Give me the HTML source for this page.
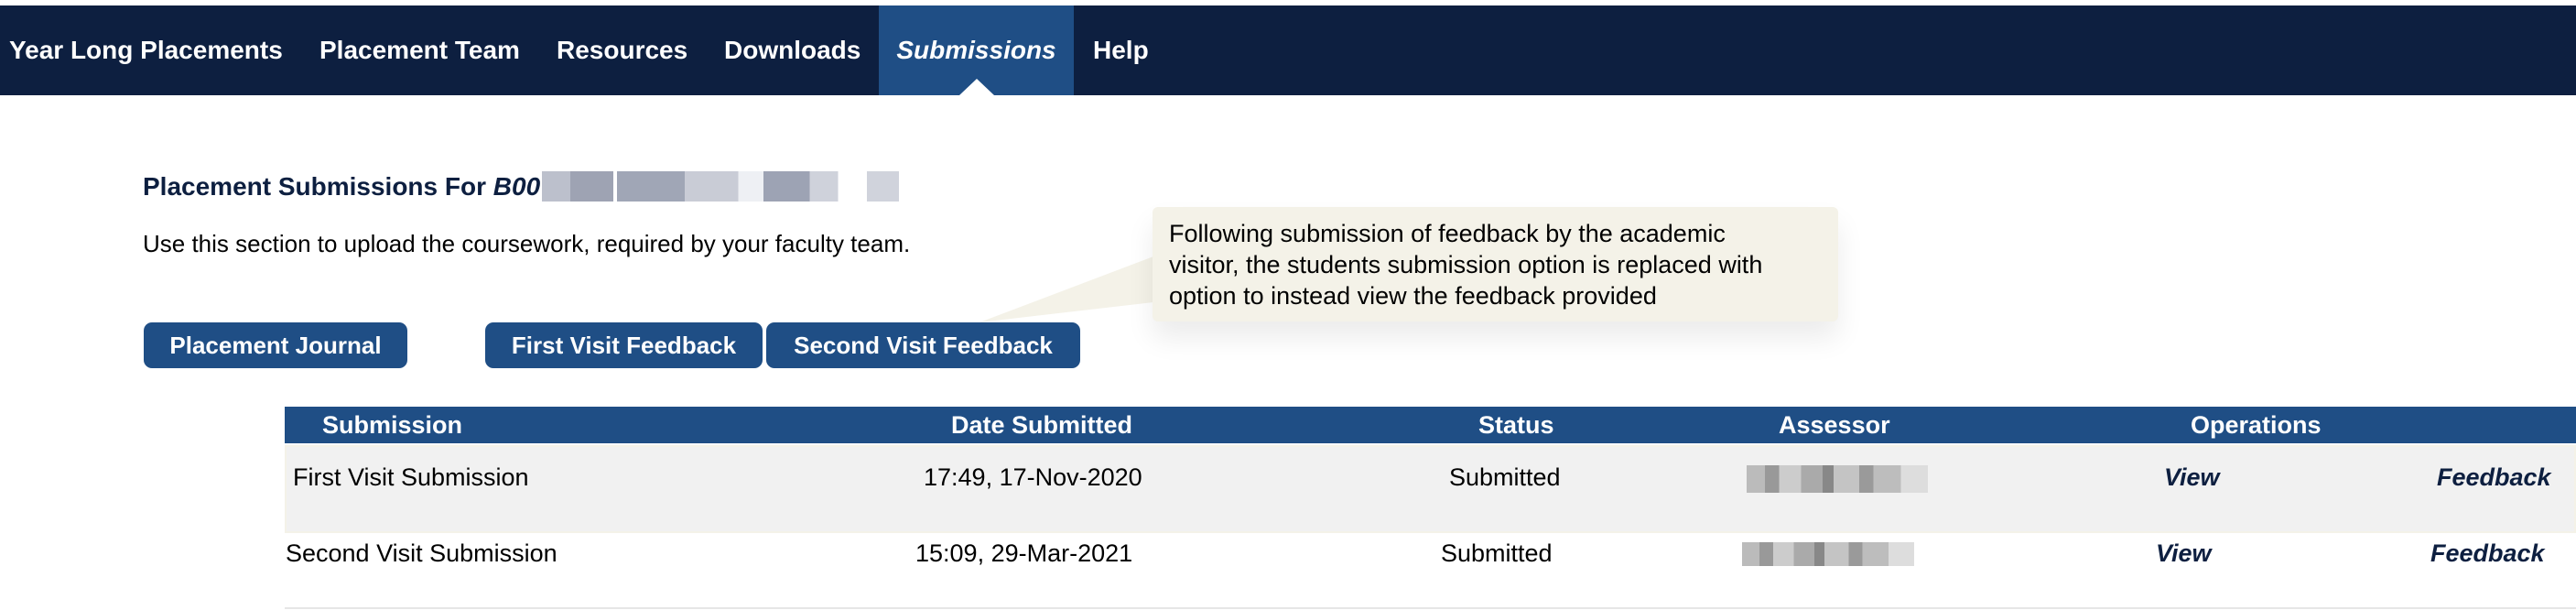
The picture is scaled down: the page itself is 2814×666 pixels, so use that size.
<!DOCTYPE html>
<html><head><meta charset="utf-8"><style>
*{margin:0;padding:0;box-sizing:border-box}
body{width:2814px;height:666px;background:#fff;font-family:"Liberation Sans",Arial,sans-serif;position:relative;overflow:hidden;color:#000}
.a{position:absolute;white-space:nowrap}
.nav{position:absolute;left:0;top:6px;width:2814px;height:98px;background:#0d1f40}
.ni{position:absolute;top:0;height:98px;line-height:98px;color:#fff;font-weight:bold;font-size:28px}
.btn{position:absolute;top:352px;height:50px;line-height:50px;background:#1f4e85;color:#fff;font-weight:bold;font-size:26px;border-radius:9px;text-align:center}
.hd{position:absolute;top:444px;left:311px;width:2503px;height:40px;background:#1f4e85}
.ht{position:absolute;top:444px;line-height:40px;color:#fff;font-weight:bold;font-size:27px}
.c{font-size:27px;line-height:30px}
.lk{color:#0d1f40;font-weight:bold;font-style:italic}
.blur{position:absolute;background:linear-gradient(90deg,#bbb 0 10%,#999 10% 18%,#ccc 18% 30%,#aaa 30% 42%,#888 42% 48%,#c4c4c4 48% 62%,#9a9a9a 62% 70%,#bdbdbd 70% 85%,#ddd 85%)}
</style></head><body>
<div class="nav">
<div class="ni" style="left:10px">Year Long Placements</div>
<div class="ni" style="left:349px">Placement Team</div>
<div class="ni" style="left:608px">Resources</div>
<div class="ni" style="left:791px">Downloads</div>
<div class="ni" style="left:960px;width:213px;background:#1f4e85;text-align:center;font-style:italic">Submissions</div>
<div class="ni" style="left:1194px">Help</div>
<div style="position:absolute;left:1048px;top:80px;width:0;height:0;border-left:19px solid transparent;border-right:19px solid transparent;border-bottom:18px solid #fff"></div>
</div>
<div class="a" style="left:156px;top:188px;font-size:28px;font-weight:bold;color:#0d1f40">Placement Submissions For <i>B00</i></div>
<div class="blur" style="left:592px;top:187px;width:390px;height:33px;background:linear-gradient(90deg,#bcc0cc 0 8%,#9ea3b3 8% 20%,#fff 20% 21%,#a0a6b6 21% 40%,#c9ccd6 40% 55%,#eef0f4 55% 62%,#9da3b4 62% 75%,#cfd2db 75% 83%,#fff 83% 91%,#d0d3dc 91%)"></div>
<div class="a" style="left:156px;top:251px;font-size:26px">Use this section to upload the coursework, required by your faculty team.</div>
<div class="btn" style="left:157px;width:288px">Placement Journal</div>
<div class="btn" style="left:530px;width:303px">First Visit Feedback</div>
<div class="btn" style="left:837px;width:343px">Second Visit Feedback</div>
<svg class="a" style="left:1060px;top:270px" width="210" height="90"><polygon points="10,82 200,10 200,60" fill="#f4f2e8"/></svg>
<div class="a" style="left:1259px;top:226px;width:749px;height:125px;background:#f4f2e8;border-radius:6px;box-shadow:0 18px 30px rgba(0,0,0,0.08);padding:12px 18px;font-size:27px;line-height:34px">Following submission of feedback by the academic<br>visitor, the students submission option is replaced with<br>option to instead view the feedback provided</div>
<div class="hd"></div>
<div class="ht" style="left:352px">Submission</div>
<div class="ht" style="left:1039px">Date Submitted</div>
<div class="ht" style="left:1615px">Status</div>
<div class="ht" style="left:1943px">Assessor</div>
<div class="ht" style="left:2393px">Operations</div>
<div class="a" style="left:311px;top:486px;width:2503px;height:96px;background:#f1f1f1;border:2px solid #f4f2e8"></div>
<div class="a c" style="left:320px;top:506px">First Visit Submission</div>
<div class="a c" style="left:1009px;top:506px">17:49, 17-Nov-2020</div>
<div class="a c" style="left:1583px;top:506px">Submitted</div>
<div class="blur" style="left:1908px;top:508px;width:198px;height:30px"></div>
<div class="a c lk" style="left:2364px;top:506px">View</div>
<div class="a c lk" style="left:2662px;top:506px">Feedback</div>
<div class="a c" style="left:312px;top:589px">Second Visit Submission</div>
<div class="a c" style="left:1000px;top:589px">15:09, 29-Mar-2021</div>
<div class="a c" style="left:1574px;top:589px">Submitted</div>
<div class="blur" style="left:1903px;top:592px;width:188px;height:26px"></div>
<div class="a c lk" style="left:2355px;top:589px">View</div>
<div class="a c lk" style="left:2655px;top:589px">Feedback</div>
<div class="a" style="left:311px;top:663px;width:2503px;height:2px;background:#e6e6e6"></div>
</body></html>
